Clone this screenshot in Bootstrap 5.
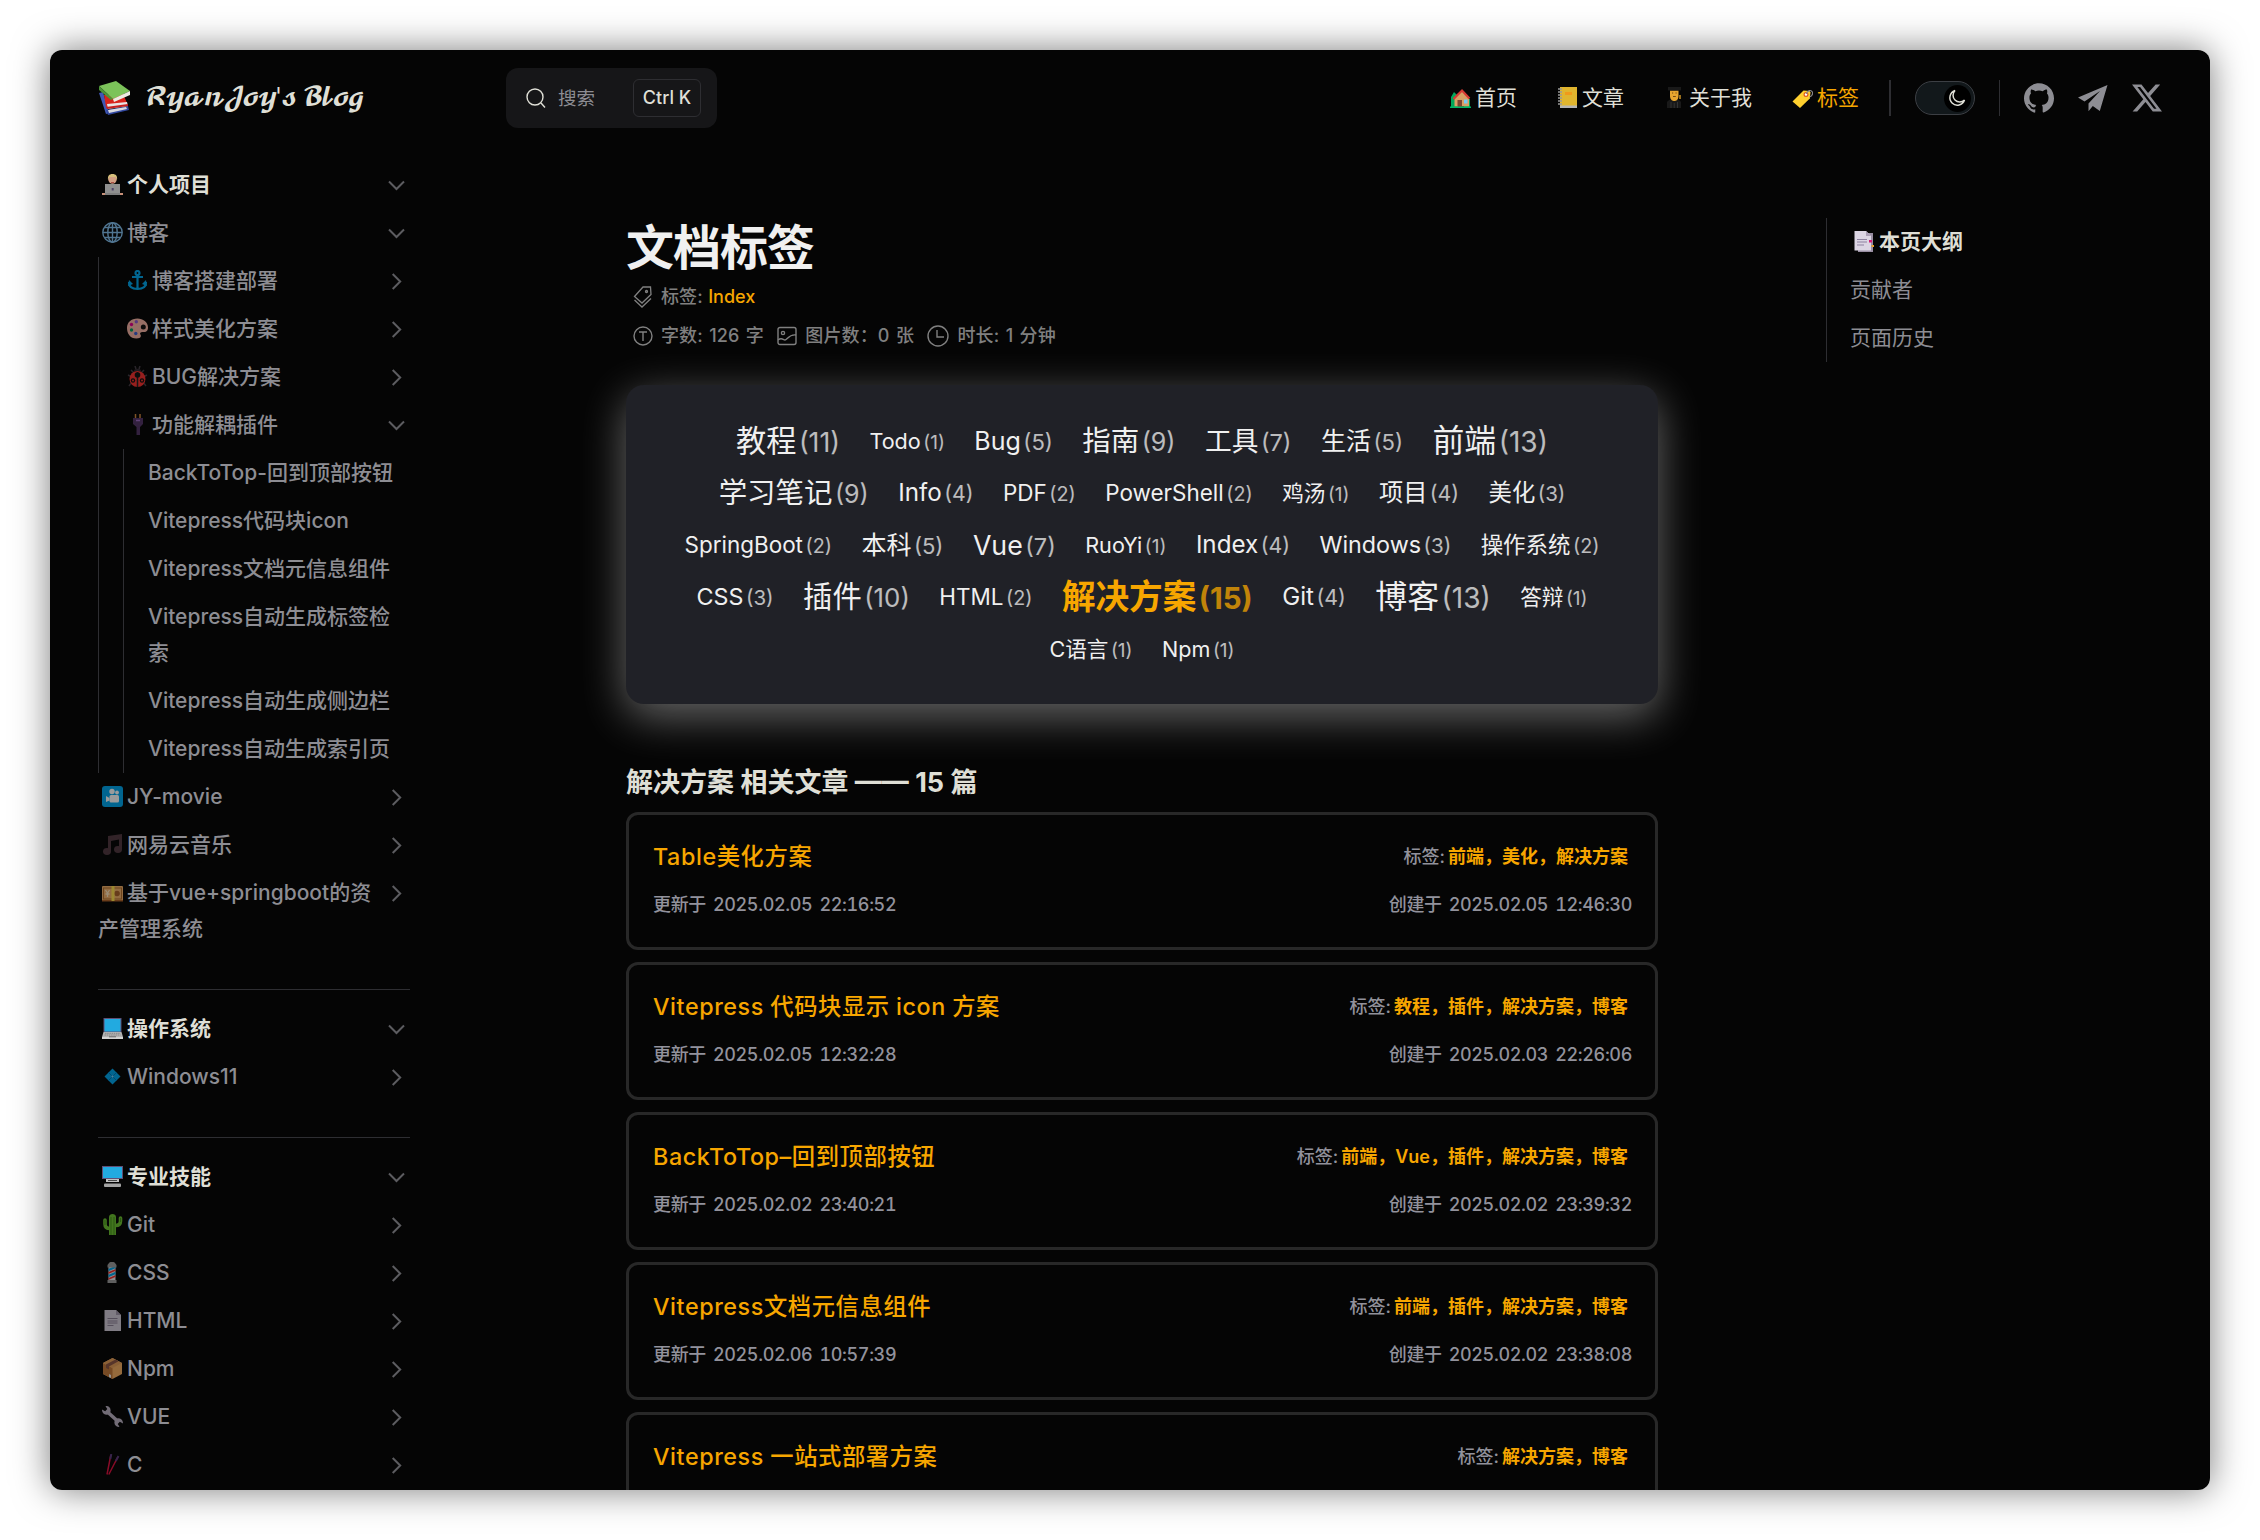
<!DOCTYPE html>
<html lang="zh-CN" data-bs-theme="dark">
<head>
<meta charset="utf-8">
<title>文档标签 | RyanJoy's Blog</title>
<link href="https://cdn.jsdelivr.net/npm/bootstrap@5.3.0/dist/css/bootstrap.min.css" rel="stylesheet">
<style>
:root{--t1:#dfdfd6;--t2:#8d8d93;--t3:#5c5c60;--bg:#050505;--line:#2e2e32;--brand:#f7a600}
html,body{height:1540px;overflow:hidden}
body{background:#fff;margin:0;font-family:Inter,"Noto Sans CJK SC",sans-serif;font-size:21px;line-height:36px;color:var(--t1)}
.page-window{width:2160px;height:1440px;background:var(--bg);border-radius:12px;overflow:hidden}
.window-glow{box-shadow:0 0 36px rgba(0,0,0,.52);border-radius:12px;width:2160px;height:1440px;margin:50px}
.topbar{height:96px;padding:0 48px}
.brand-logo{width:34px;height:34px}
.brand-text{font-family:"DejaVu Math TeX Gyre","DejaVu Serif",serif;font-size:23.500px;font-weight:400;letter-spacing:-3.100px;word-spacing:4px;color:var(--t1);margin-left:13px;width:361px;white-space:nowrap}
.brand-text .apos{letter-spacing:-1px}
.search-btn{width:211px;height:60px;border-radius:12px;background:#161618;padding:0 16px 0 20px}
.search-btn .ph{font-size:18.5px;color:var(--t2)}
.key-hint{border:1.5px solid var(--line);border-radius:6px;height:38px;width:68px;font-size:18px;font-weight:500;line-height:35px;text-align:center}
.emo{width:21px;height:21px;margin:0 4px;flex:none;vertical-align:-3px}
.menu-link{color:var(--t1);text-decoration:none;font-weight:400;margin-right:36px}
.menu-link.on{color:var(--brand);margin-right:30px}
.vr-line{width:1.5px;height:36px;background:var(--line)}
.theme-switch{width:60px;height:34px;border-radius:17px;background:#12181b;border:1.5px solid #3c3f44;padding:0 3px;margin:0 24px}
.theme-knob{width:27px;height:27px;border-radius:50%;background:#000}
.soc{margin-left:24px}
.side{width:408px;padding:0 48px}
.side-group{padding:15px 0 36px}
.side-group+.side-group{border-top:1px solid var(--line)}
.side-row{padding:6px 0;color:var(--t2);font-weight:500;white-space:nowrap}
.side-row .emo{opacity:.6}
.side-row.head{color:var(--t1);font-weight:700}
.side-row.head .emo{opacity:.88}
.side-row svg.chev{width:27px;height:27px;margin:5px 0 0;flex:none}
.side-sub{border-left:1px solid var(--line);padding-left:24px}
.doc{width:1032px;margin-left:168px;padding-top:73px}
.doc h1{font-size:48px;line-height:58px;font-weight:700;letter-spacing:-.02em;color:#f0f0f0;margin:0}
.meta{font-size:18px;color:#808080;font-weight:500;letter-spacing:.1px;word-spacing:1.500px;line-height:39px;white-space:nowrap}
.meta svg{flex:none;margin:0 8px 0 13.500px}
.meta svg:first-child{margin-left:7px}
.brand-c{color:var(--brand);margin-left:-1px;letter-spacing:0}
.cloud{height:319px;border-radius:18px;background:#202127;box-shadow:0 12px 45px rgba(255,255,255,.4);padding-top:30px;margin-top:30px}
.cloud-row{height:52px;gap:29.500px}
.tag-i{color:#f0f0f0;white-space:nowrap;font-size:calc(20.75px + var(--n)*.857px);line-height:52px}
.tag-i small{font-size:.88em;opacity:.75;margin-left:2.500px}
.tag-i.on{color:var(--brand);font-weight:700}
.doc .rel-title{font-size:27px;font-weight:700;line-height:36px;margin:61px 0 11px;white-space:nowrap;color:var(--t1)}
.post{height:138px;border:3px solid #282828;border-radius:12px;margin-bottom:12px;padding:21px 23px 0 24px;white-space:nowrap}
.post-t{font-size:23.300px;letter-spacing:.6px;word-spacing:-.5px;font-weight:500;color:var(--brand);line-height:42px}
.post-s{font-size:18px;letter-spacing:0;color:#92929c;font-weight:500;line-height:42px}
.post-d{margin-top:6px;letter-spacing:-.35px;word-spacing:2.500px;font-variant-numeric:tabular-nums}
.post-s b{font-weight:600;color:var(--brand);letter-spacing:0;margin:0 4px 0 3px}
.toc{margin-left:168px;margin-top:72px;height:144px;border-left:1px solid var(--line);padding-left:23px;color:var(--t2)}
.toc div{line-height:48px}
.toc .toc-h{color:var(--t1);font-weight:700}
.toc .emo{margin-left:3px;margin-right:5px}
</style>
<script src="https://cdn.jsdelivr.net/npm/bootstrap@5.3.0/dist/js/bootstrap.bundle.min.js"></script>
</head>
<body>
<svg class="d-none" xmlns="http://www.w3.org/2000/svg">
<symbol id="down" viewBox="0 0 27 27"><path d="M6 9.500l7.500 7.500L21 9.500" fill="none" stroke="#5c5c60" stroke-width="2"/></symbol>
<symbol id="right" viewBox="0 0 27 27"><path d="M9.700 6l7.500 7.500L9.700 21" fill="none" stroke="#5c5c60" stroke-width="2"/></symbol>
<symbol id="books" viewBox="0 0 34 34"><path d="M1 12l4-1 6 21-3 1z" fill="#3f57b5"/><path d="M8 29l22-4 1 4-21 5z" fill="#3248a0"/><path d="M10 29l18-3 1 2-18 4z" fill="#d9d9df"/><path d="M6 14l19-1 4 9-21 4z" fill="#d8241c"/><path d="M9 23l20-2 1 4-20 3z" fill="#e8e4e4"/><path d="M8 26l22-3v2L9 28z" fill="#c62020"/><path d="M1 5L18 0l14 10-17 8z" fill="#7cc35a"/><path d="M1 5v4l12 10 2-1z" fill="#4c9438"/><path d="M15 18l17-8v4l-16 7z" fill="#ecebe3"/></symbol>
<symbol id="coder" viewBox="0 0 21 21"><path d="M4 14c0-3 3-4 6.500-4s6.500 1 6.500 4v5H4z" fill="#8a8a96"/><circle cx="10.500" cy="5.500" r="4.200" fill="#f0b596"/><path d="M6 6C5.500 2 7 0 10.500 0s5 2 4.500 6l-1.500-3h-6z" fill="#f3da8c"/><path d="M9 8.500h3" stroke="#c05a50"/><path d="M3 10h15v9H3z" fill="#a3a3a3"/><path d="M0 19h21v2H0z" fill="#e3a489"/><path d="M3 19h15v2H3z" fill="#8f8f8f"/><rect x="9.700" y="14" width="2" height="2.500" fill="#5c4e78"/></symbol>
<symbol id="globe" viewBox="0 0 21 21"><g fill="none" stroke="#83c0ef" stroke-width="1.400"><circle cx="10.500" cy="10.500" r="9.700"/><ellipse cx="10.500" cy="10.500" rx="4.700" ry="9.700"/><path d="M10.500 1v19M1 10.500h19M2.500 5.500h16M2.500 15.500h16"/></g></symbol>
<symbol id="anchor" viewBox="0 0 21 21"><g fill="none" stroke="#00a6ed" stroke-width="2.200"><circle cx="10.500" cy="3" r="2"/><path d="M10.500 5v14M5 7h11M2 12c0 5 4 7 8.500 7s8.500-2 8.500-7"/></g><path d="M1 16l1-6 4 4zM20 16l-1-6-4 4z" fill="#00a6ed"/></symbol>
<symbol id="palette" viewBox="0 0 21 21"><path d="M10.500.5C4 .5 0 4.500 0 10s3 10.500 9.500 10.500c5 0 5-3 3.500-4.500 0-2 2-2 4-2 3 0 4-2 4-4.500C21 4 16 .5 10.500.5z" fill="#f7b5a5"/><circle cx="16.300" cy="9" r="2.500" fill="#111"/><circle cx="4.500" cy="6.500" r="1.700" fill="#e3008c"/><circle cx="9.300" cy="3.800" r="1.700" fill="#8d5ed0"/><circle cx="4.500" cy="12" r="1.700" fill="#00a060"/><circle cx="8.800" cy="15.500" r="1.700" fill="#3f5fd0"/></symbol>
<symbol id="bug" viewBox="0 0 21 21"><path d="M4 4l3 3M17 4l-3 3M1 9l4 2M20 9l-4 2M2 20l3-4M19 20l-3-4M8 0l1 3M13 0l-1 3" stroke="#443b44" stroke-width="1.500"/><path d="M7 5c0-3 7-3 7 0z" fill="#332b33"/><ellipse cx="10.500" cy="13" rx="8" ry="8" fill="#f8312f"/><path d="M10.500 6v15" stroke="#222" stroke-width="1.500"/><circle cx="10.500" cy="9" r="2.800" fill="#111"/><circle cx="6" cy="14.500" r="2.200" fill="#111"/><circle cx="15" cy="14.500" r="2.200" fill="#111"/><circle cx="6" cy="14.500" r="1" fill="#f8312f"/><circle cx="15" cy="14.500" r="1" fill="#f8312f"/></symbol>
<symbol id="plug" viewBox="0 0 21 21"><path d="M8.500 0v4M13 0v4" stroke="#d3883e" stroke-width="1.500"/><path d="M6 4h10v6l-3 3v8H9.500v-8L6 10z" fill="#533566"/><path d="M9 6.500h4" stroke="#9f6cc5" stroke-width="1.500"/></symbol>
<symbol id="cinema" viewBox="0 0 21 21"><rect width="21" height="21" rx="3" fill="#00a6ed"/><circle cx="10" cy="5.500" r="2.700" fill="#fff"/><circle cx="15" cy="6.500" r="1.900" fill="#fff"/><rect x="7.500" y="9" width="9.500" height="7.500" rx="1.500" fill="#fff"/><path d="M7.500 12L4 10v6l3.500-1.500z" fill="#fff"/></symbol>
<symbol id="music" viewBox="0 0 21 21"><path d="M6 2l14-2v15h-3V5.500L9 7v10H6z" fill="#503840"/><ellipse cx="5" cy="17.500" rx="4" ry="3.400" fill="#503840"/><ellipse cx="16" cy="15.500" rx="4" ry="3.400" fill="#503840"/></symbol>
<symbol id="yen" viewBox="0 0 21 21"><rect y="4" width="21" height="15" rx="1" fill="#f0b06a"/><path d="M0 18h21v1.500H0z" fill="#ad6229"/><rect x="1.500" y="6" width="18" height="11" fill="none" stroke="#b2702f"/><path d="M3.500 8l2 3 2-3M5.500 11v4M3.500 12h4" stroke="#ffe6c0" stroke-width="1.300" fill="none"/><circle cx="15" cy="11.500" r="2.800" fill="#a9622a"/><rect x="9.500" y="4" width="3" height="15" fill="#ffe04d"/></symbol>
<symbol id="laptop" viewBox="0 0 21 21"><path d="M1.500 0h18v14h-18z" fill="#6d5a86"/><path d="M2.500 1h16v12.500h-16z" fill="#26c1ff"/><path d="M1.500 14h18l1.500 5H0z" fill="#ccc"/><path d="M0 19h21v2H0z" fill="#f0f0f0"/><path d="M3 15.300h15M2.500 17h16" stroke="#999" stroke-dasharray="1.500 .7"/><path d="M7 18.800h7" stroke="#777"/></symbol>
<symbol id="diamond" viewBox="0 0 21 21"><path d="M10.500 2.500l8 8-8 8-8-8z" fill="#00a6ed"/><path d="M6.500 6.500l8 8M14.500 6.500l-8 8" stroke="#0074ba" stroke-width=".9"/><circle cx="10.500" cy="10.500" r="1" fill="#81d5ff"/></symbol>
<symbol id="desktop" viewBox="0 0 21 21"><path d="M0 0h21v13H0z" fill="#6d5a86"/><path d="M1 1h19v11H1z" fill="#26c1ff"/><path d="M4 13h13v3H4z" fill="#ddd"/><path d="M6 14h9v1H6z" fill="#555"/><rect x="2" y="17.500" width="17" height="3.500" rx="1" fill="#bbb"/></symbol>
<symbol id="cactus" viewBox="0 0 21 21"><path d="M3 6v4c0 3 2 4.500 5 4.500M18.500 4v3c0 3-2 4.500-5 4.500" stroke="#6cc030" stroke-width="3.600" fill="none" stroke-linecap="round"/><path d="M7 21V3c0-4 7-4 7 0v18z" fill="#6cc030"/><path d="M9 3v18M12 3v18M3 6v5M18.500 4v4" stroke="#44911b" stroke-width="1"/></symbol>
<symbol id="barber" viewBox="0 0 21 21"><rect x="6.500" y="4" width="7" height="14" fill="#e8e8ee"/><path d="M6.500 8l7-3M6.500 14l7-3" stroke="#00a6ed" stroke-width="2"/><path d="M6.500 11l7-3M6.500 17l7-3" stroke="#f8312f" stroke-width="1.800"/><path d="M7 1c1-1.500 5-1.500 6 0l1.500 2v2.500h-9V3zM5.500 18h9v3h-9z" fill="#9b9b9b"/></symbol>
<symbol id="doc" viewBox="0 0 21 21"><path d="M2.500 0H14l5 5v16H2.500z" fill="#d3cbd9"/><path d="M14 0l5 5h-5z" fill="#9e94a8"/><path d="M5.500 8.500h10M5.500 11h10M5.500 13h10M5.500 15.500h6" stroke="#8a7f94" stroke-width="1"/></symbol>
<symbol id="box" viewBox="0 0 21 21"><path d="M10.500 0L20 5v11l-9.500 5L1 16V5z" fill="#f3ad61"/><path d="M1 5l9.500 5v11L1 16z" fill="#c2793a"/><path d="M1 5l9.500-5L20 5l-9.500 5z" fill="#e39d58"/><path d="M4 6.500L13.500 1.500l3 1.700L7 8.500v3l-3-1.500z" fill="#8c5543"/><path d="M7 16l2 1v3l-2-1z" fill="#eee"/></symbol>
<symbol id="wrench" viewBox="0 0 21 21"><path d="M5.500 6L15.500 15" stroke="#bcb2c4" stroke-width="3.600"/><path d="M0 3.500l3.200 1.700L5.300 3 3.500.2C6.500-.5 9.200 2 8.500 5.500 8 8.500 4.500 9.500 2 8 .5 7 0 5 0 3.500z" fill="#bcb2c4"/><path d="M21 17.500l-3.200-1.700-2.100 2.200 1.800 2.800c-3 .7-5.700-1.800-5-5.300.5-3 4-4 6.500-2.500 1.500 1 2 3 2 4.500z" fill="#bcb2c4"/></symbol>
<symbol id="sticks" viewBox="0 0 21 21"><path d="M8.800 1L5 20.500M15.800 3L6.800 20.500" stroke="#e0103f" stroke-width="1.500"/><path d="M9.300 0L8.300 5M16.500 2l-2.700 5" stroke="#5a3a7a" stroke-width="2"/></symbol>
<symbol id="house" viewBox="0 0 21 21"><path d="M1 21V10l3-5 4 4v12z" fill="#00a65a"/><path d="M14 12h6v9h-6z" fill="#00a65a"/><path d="M4.500 11l7.500-8 7 8v8.500H4.500z" fill="#d9a066"/><path d="M3.500 12L12 3.500l7.500 8" fill="none" stroke="#d83a34" stroke-width="2.200"/><rect x="7.500" y="13" width="4.500" height="6.500" fill="#7d4533"/><rect x="14" y="12.500" width="3.500" height="4" fill="#79c8f5"/><path d="M0 19.500h21V21H0z" fill="#00b566"/></symbol>
<symbol id="book" viewBox="0 0 21 21"><path d="M3 0h17v19H3z" fill="#e0b52e"/><path d="M3 18.500h17V21H3z" fill="#b5b5b5"/><rect x="8" y="5" width="7" height="3" fill="#f09a1b"/><path d="M1 2h4M1 5h4M1 8h4M1 11h4M1 14h4M1 17h4" stroke="#999" stroke-width="1.300"/></symbol>
<symbol id="grad" viewBox="0 0 21 21"><path d="M3 21V15c2-4 12-4 14 0v6z" fill="#191919"/><path d="M6 3.500h8.500V9c0 4-2.500 5-4.200 5S6 13 6 9z" fill="#e8a62f"/><path d="M4 0h13v3.500H4z" fill="#191919"/><path d="M16 8v4" stroke="#c99025" stroke-width="1.500"/><path d="M8 6h1.200M11.500 6h1.200M9 9.500h2.800" stroke="#774a12"/><path d="M7 15v6M10.200 16v5M13.500 15v6" stroke="#333"/></symbol>
<symbol id="tag" viewBox="0 0 21 21"><path d="M.5 14.500L11.500 3.500l6 .5 1 1.500-.7 6L8 21z" fill="#ffd02f"/><circle cx="14" cy="7.500" r="1.900" fill="#fff" stroke="#e05a20" stroke-width="1.200"/><path d="M14.500 7c.5-4 5.500-4.500 6-1.500s-1.500 4-3 4.500" fill="none" stroke="#8a8a8a" stroke-width="1.100"/></symbol>
<symbol id="toc" viewBox="0 0 21 21"><path d="M5 2h15v19H5z" fill="#998ea2"/><path d="M1.500 0H13l5 5v14.500H1.500z" fill="#dcd5e4"/><path d="M13 0l5 5h-5z" fill="#a99db5"/><path d="M4 8.500h10M4 11h10M4 14h7" stroke="#8d81a0"/><path d="M16 9h3v2.500h-3z" fill="#d81b74"/><path d="M18.500 14H21v2h-2.500z" fill="#e8a12d"/></symbol>
</svg>
<div class="window-glow">
<div class="page-window">
<header class="topbar d-flex align-items-center">
  <svg class="brand-logo"><use href="#books"/></svg><div class="brand-text">𝓡𝔂𝓪𝓷𝓙𝓸𝔂<span class="apos">'</span>𝓼 𝓑𝓵𝓸𝓰</div>
  <div class="search-btn d-flex align-items-center">
    <svg width="20" height="20" viewBox="0 0 20 20" fill="none" stroke="#dfdfd6" stroke-width="1.400"><circle cx="9" cy="9" r="8"/><path d="M15 15l4 4.500"/></svg>
    <span class="ph ms-2 ps-1 me-auto">搜索</span><span class="key-hint">Ctrl K</span>
  </div>
  <nav class="d-flex align-items-center ms-auto">
    <a class="menu-link" href="#"><svg class="emo"><use href="#house"/></svg>首页</a>
    <a class="menu-link" href="#"><svg class="emo"><use href="#book"/></svg>文章</a>
    <a class="menu-link" href="#"><svg class="emo"><use href="#grad"/></svg>关于我</a>
    <a class="menu-link on" href="#"><svg class="emo"><use href="#tag"/></svg>标签</a>
    <span class="vr-line"></span>
    <span class="theme-switch d-flex align-items-center justify-content-end"><span class="theme-knob d-flex align-items-center justify-content-center"><svg width="18" height="18" viewBox="0 0 18 18" fill="none" stroke="#dfdfd6" stroke-width="1.500"><path d="M7 1.500A7.500 7.500 0 1 0 16.500 11 6.500 6.500 0 0 1 7 1.500z"/></svg></span></span>
    <span class="vr-line"></span>
    <svg class="soc" width="30" height="30" viewBox="0 0 24 24" fill="#8d8d93"><path d="M12 .297c-6.630 0-12 5.373-12 12 0 5.303 3.438 9.800 8.205 11.385.6.113.82-.258.82-.577 0-.285-.01-1.040-.015-2.040-3.338.724-4.042-1.610-4.042-1.610C4.422 18.070 3.633 17.700 3.633 17.700c-1.087-.744.084-.729.084-.729 1.205.084 1.838 1.236 1.838 1.236 1.070 1.835 2.809 1.305 3.495.998.108-.776.417-1.305.76-1.605-2.665-.3-5.466-1.332-5.466-5.930 0-1.310.465-2.380 1.235-3.220-.135-.303-.54-1.523.105-3.176 0 0 1.005-.322 3.300 1.230.96-.267 1.980-.399 3-.405 1.020.006 2.040.138 3 .405 2.280-1.552 3.285-1.230 3.285-1.230.645 1.653.24 2.873.12 3.176.765.840 1.230 1.910 1.230 3.220 0 4.610-2.805 5.625-5.475 5.920.42.36.81 1.096.81 2.220 0 1.606-.015 2.896-.015 3.286 0 .315.21.69.825.57C20.565 22.092 24 17.592 24 12.297c0-6.627-5.373-12-12-12"/></svg>
    <svg class="soc" width="30" height="30" viewBox="0 0 30 30" fill="#8d8d93"><path d="M29.500 2L0 14.500l6.500 4L22 8 10.500 20.500v7.700l4.300-5.200 7 5z"/></svg>
    <svg class="soc" width="30" height="30" viewBox="0 0 24 24" fill="#8d8d93"><path d="M18.901 1.153h3.680l-8.040 9.190L24 22.846h-7.406l-5.800-7.584-6.638 7.584H.474l8.600-9.830L0 1.154h7.594l5.243 6.932zM17.610 20.644h2.039L6.486 3.240H4.298z"/></svg>
  </nav>
</header>
<div class="d-flex align-items-start">
<aside class="side">
  <section class="side-group">
    <div class="side-row head d-flex"><span class="flex-grow-1"><svg class="emo"><use href="#coder"/></svg>个人项目</span><svg class="chev"><use href="#down"/></svg></div>
    <div class="side-row d-flex"><span class="flex-grow-1"><svg class="emo"><use href="#globe"/></svg>博客</span><svg class="chev"><use href="#down"/></svg></div>
    <div class="side-sub">
      <div class="side-row d-flex"><span class="flex-grow-1"><svg class="emo"><use href="#anchor"/></svg>博客搭建部署</span><svg class="chev"><use href="#right"/></svg></div>
      <div class="side-row d-flex"><span class="flex-grow-1"><svg class="emo"><use href="#palette"/></svg>样式美化方案</span><svg class="chev"><use href="#right"/></svg></div>
      <div class="side-row d-flex"><span class="flex-grow-1"><svg class="emo"><use href="#bug"/></svg>BUG解决方案</span><svg class="chev"><use href="#right"/></svg></div>
      <div class="side-row d-flex"><span class="flex-grow-1"><svg class="emo"><use href="#plug"/></svg>功能解耦插件</span><svg class="chev"><use href="#down"/></svg></div>
      <div class="side-sub">
        <div class="side-row">BackToTop-回到顶部按钮</div>
        <div class="side-row">Vitepress代码块icon</div>
        <div class="side-row">Vitepress文档元信息组件</div>
        <div class="side-row">Vitepress自动生成标签检<br>索</div>
        <div class="side-row">Vitepress自动生成侧边栏</div>
        <div class="side-row">Vitepress自动生成索引页</div>
      </div>
    </div>
    <div class="side-row d-flex"><span class="flex-grow-1"><svg class="emo"><use href="#cinema"/></svg>JY-movie</span><svg class="chev"><use href="#right"/></svg></div>
    <div class="side-row d-flex"><span class="flex-grow-1"><svg class="emo"><use href="#music"/></svg>网易云音乐</span><svg class="chev"><use href="#right"/></svg></div>
    <div class="side-row d-flex"><span class="flex-grow-1"><svg class="emo"><use href="#yen"/></svg>基于vue+springboot的资<br>产管理系统</span><svg class="chev"><use href="#right"/></svg></div>
  </section>
  <section class="side-group">
    <div class="side-row head d-flex"><span class="flex-grow-1"><svg class="emo"><use href="#laptop"/></svg>操作系统</span><svg class="chev"><use href="#down"/></svg></div>
    <div class="side-row d-flex"><span class="flex-grow-1"><svg class="emo"><use href="#diamond"/></svg>Windows11</span><svg class="chev"><use href="#right"/></svg></div>
  </section>
  <section class="side-group">
    <div class="side-row head d-flex"><span class="flex-grow-1"><svg class="emo"><use href="#desktop"/></svg>专业技能</span><svg class="chev"><use href="#down"/></svg></div>
    <div class="side-row d-flex"><span class="flex-grow-1"><svg class="emo"><use href="#cactus"/></svg>Git</span><svg class="chev"><use href="#right"/></svg></div>
    <div class="side-row d-flex"><span class="flex-grow-1"><svg class="emo"><use href="#barber"/></svg>CSS</span><svg class="chev"><use href="#right"/></svg></div>
    <div class="side-row d-flex"><span class="flex-grow-1"><svg class="emo"><use href="#doc"/></svg>HTML</span><svg class="chev"><use href="#right"/></svg></div>
    <div class="side-row d-flex"><span class="flex-grow-1"><svg class="emo"><use href="#box"/></svg>Npm</span><svg class="chev"><use href="#right"/></svg></div>
    <div class="side-row d-flex"><span class="flex-grow-1"><svg class="emo"><use href="#wrench"/></svg>VUE</span><svg class="chev"><use href="#right"/></svg></div>
    <div class="side-row d-flex"><span class="flex-grow-1"><svg class="emo"><use href="#sticks"/></svg>C</span><svg class="chev"><use href="#right"/></svg></div>
  </section>
</aside>
<main class="doc">
  <h1>文档标签</h1>
  <div class="meta d-flex align-items-center"><svg width="20" height="22" viewBox="0 0 20 22" fill="none" stroke="#808080" stroke-width="1.300"><path d="M1.500 10.500L10 1h7.500l.5 7.500L9 17z"/><path d="M1.500 14L9 21l9-8.500"/><circle cx="13.500" cy="5.500" r="1"/></svg><span>标签: <span class="brand-c">Index</span></span></div>
  <div class="meta d-flex align-items-center">
    <svg width="20" height="20" viewBox="0 0 20 20" fill="none" stroke="#808080" stroke-width="1.400"><circle cx="10" cy="10" r="9"/><path d="M6 6h8M10 6v9"/></svg><span>字数: 126 字</span>
    <svg width="20" height="20" viewBox="0 0 20 20" fill="none" stroke="#808080" stroke-width="1.400"><rect x="1" y="1.500" width="18" height="17" rx="2"/><circle cx="6" cy="7" r="1.600"/><path d="M1 14c4-3 5 0 7 0s4-6 11-5"/></svg><span>图片数：0 张</span>
    <svg width="22" height="22" viewBox="0 0 22 22" fill="none" stroke="#808080" stroke-width="1.400"><circle cx="11" cy="11" r="10"/><path d="M10 5v7h7"/></svg><span>时长: 1 分钟</span>
  </div>
  <div class="cloud">
    <div class="cloud-row d-flex justify-content-center"><span class="tag-i" style="--n:11">教程<small>(11)</small></span><span class="tag-i" style="--n:1">Todo<small>(1)</small></span><span class="tag-i" style="--n:5">Bug<small>(5)</small></span><span class="tag-i" style="--n:9">指南<small>(9)</small></span><span class="tag-i" style="--n:7">工具<small>(7)</small></span><span class="tag-i" style="--n:5">生活<small>(5)</small></span><span class="tag-i" style="--n:13">前端<small>(13)</small></span></div>
    <div class="cloud-row d-flex justify-content-center"><span class="tag-i" style="--n:9">学习笔记<small>(9)</small></span><span class="tag-i" style="--n:4">Info<small>(4)</small></span><span class="tag-i" style="--n:2">PDF<small>(2)</small></span><span class="tag-i" style="--n:2">PowerShell<small>(2)</small></span><span class="tag-i" style="--n:1">鸡汤<small>(1)</small></span><span class="tag-i" style="--n:4">项目<small>(4)</small></span><span class="tag-i" style="--n:3">美化<small>(3)</small></span></div>
    <div class="cloud-row d-flex justify-content-center"><span class="tag-i" style="--n:2">SpringBoot<small>(2)</small></span><span class="tag-i" style="--n:5">本科<small>(5)</small></span><span class="tag-i" style="--n:7">Vue<small>(7)</small></span><span class="tag-i" style="--n:1">RuoYi<small>(1)</small></span><span class="tag-i" style="--n:4">Index<small>(4)</small></span><span class="tag-i" style="--n:3">Windows<small>(3)</small></span><span class="tag-i" style="--n:2">操作系统<small>(2)</small></span></div>
    <div class="cloud-row d-flex justify-content-center"><span class="tag-i" style="--n:3">CSS<small>(3)</small></span><span class="tag-i" style="--n:10">插件<small>(10)</small></span><span class="tag-i" style="--n:2">HTML<small>(2)</small></span><span class="tag-i on" style="--n:15">解决方案<small>(15)</small></span><span class="tag-i" style="--n:4">Git<small>(4)</small></span><span class="tag-i" style="--n:13">博客<small>(13)</small></span><span class="tag-i" style="--n:1">答辩<small>(1)</small></span></div>
    <div class="cloud-row d-flex justify-content-center"><span class="tag-i" style="--n:1">C语言<small>(1)</small></span><span class="tag-i" style="--n:1">Npm<small>(1)</small></span></div>
  </div>
  <h2 class="rel-title">解决方案 相关文章 —— 15 篇</h2>
  <article class="post"><div class="d-flex justify-content-between"><span class="post-t">Table美化方案</span><span class="post-s">标签:<b>前端，美化，解决方案</b></span></div><div class="post-s post-d d-flex justify-content-between"><span>更新于 2025.02.05 22:16:52</span><span>创建于 2025.02.05 12:46:30</span></div></article>
  <article class="post"><div class="d-flex justify-content-between"><span class="post-t">Vitepress 代码块显示 icon 方案</span><span class="post-s">标签:<b>教程，插件，解决方案，博客</b></span></div><div class="post-s post-d d-flex justify-content-between"><span>更新于 2025.02.05 12:32:28</span><span>创建于 2025.02.03 22:26:06</span></div></article>
  <article class="post"><div class="d-flex justify-content-between"><span class="post-t">BackToTop–回到顶部按钮</span><span class="post-s">标签:<b>前端，Vue，插件，解决方案，博客</b></span></div><div class="post-s post-d d-flex justify-content-between"><span>更新于 2025.02.02 23:40:21</span><span>创建于 2025.02.02 23:39:32</span></div></article>
  <article class="post"><div class="d-flex justify-content-between"><span class="post-t">Vitepress文档元信息组件</span><span class="post-s">标签:<b>前端，插件，解决方案，博客</b></span></div><div class="post-s post-d d-flex justify-content-between"><span>更新于 2025.02.06 10:57:39</span><span>创建于 2025.02.02 23:38:08</span></div></article>
  <article class="post"><div class="d-flex justify-content-between"><span class="post-t">Vitepress 一站式部署方案</span><span class="post-s">标签:<b>解决方案，博客</b></span></div></article>
</main>
<aside class="toc"><div class="toc-h"><svg class="emo"><use href="#toc"/></svg>本页大纲</div><div>贡献者</div><div>页面历史</div></aside>
</div>
</div>
</div>
</body>
</html>
